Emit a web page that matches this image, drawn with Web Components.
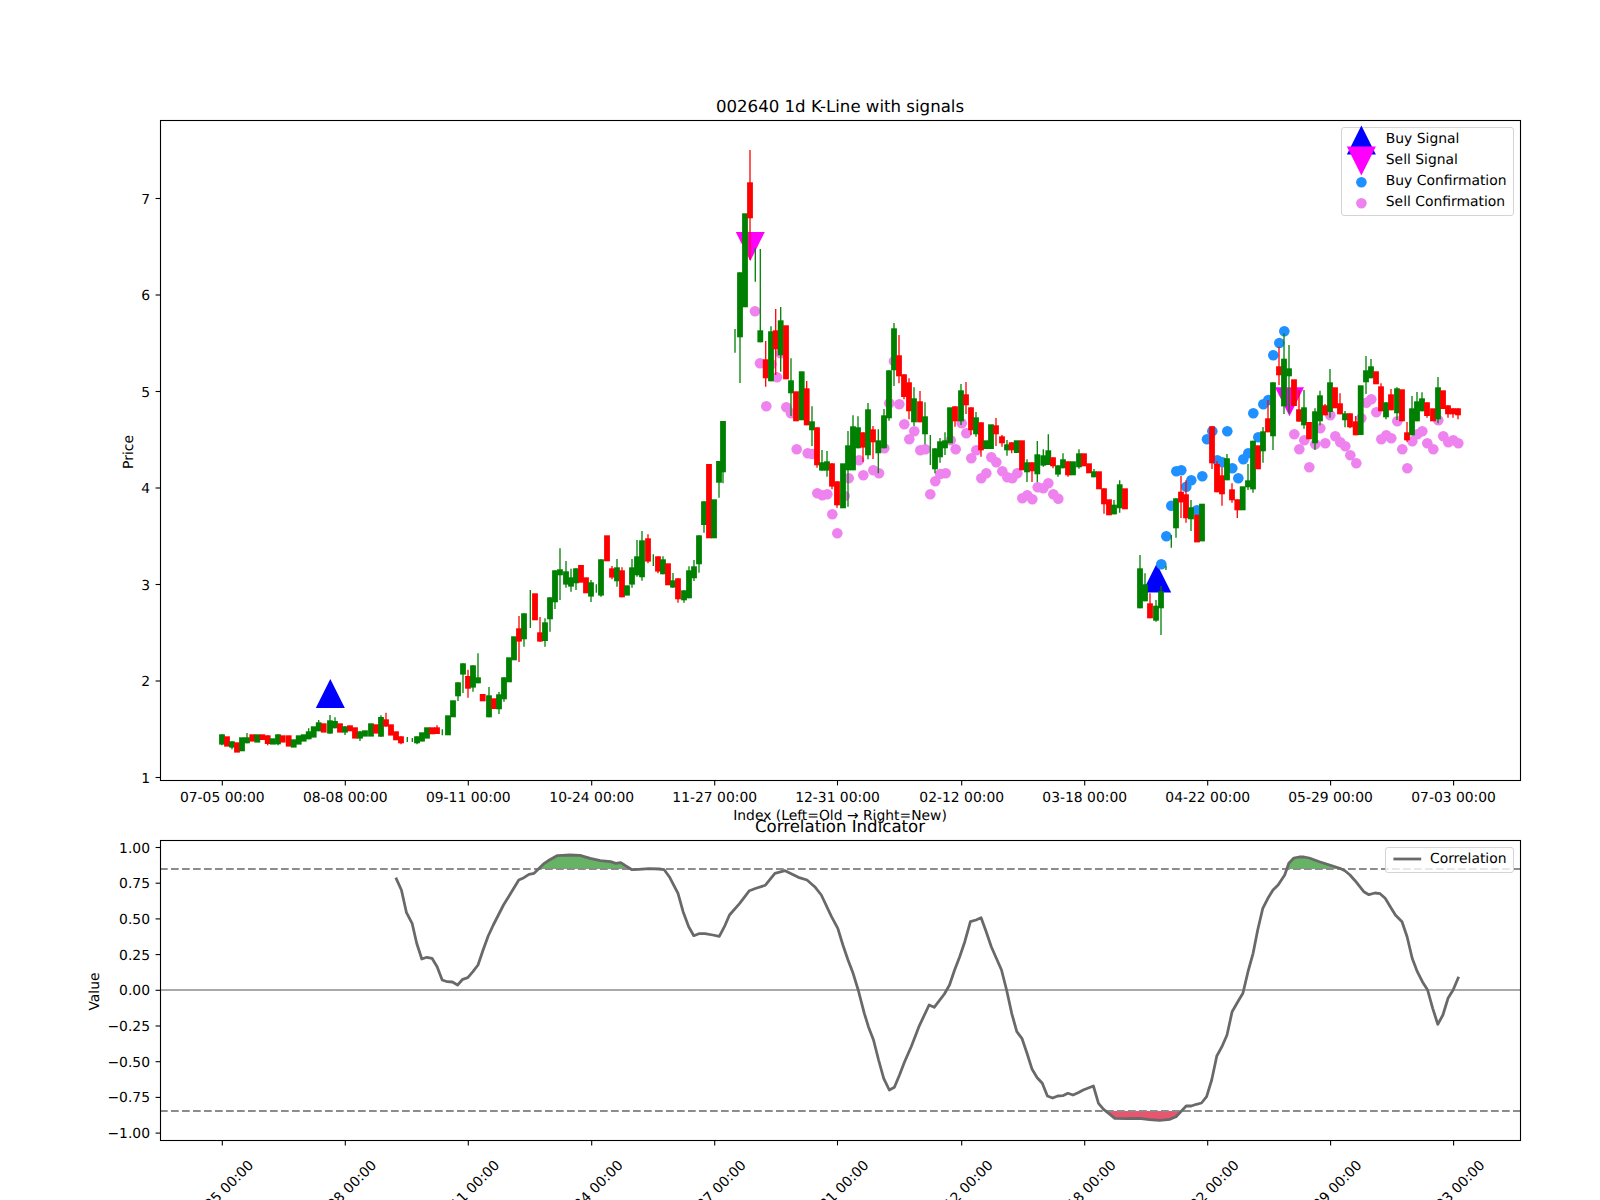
<!DOCTYPE html>
<html>
<head>
<meta charset="utf-8">
<title>002640 1d K-Line with signals</title>
<style>
html, body { margin: 0; padding: 0; background: #fff; overflow: hidden; }
</style>
</head>
<body>
<k-figure>
  <chart-panel title-text="002640 1d K-Line with signals">
    <kline-plot>
      <chart-legend style="top:7.3px">
        <legend-item kind="buy">Buy Signal</legend-item>
        <legend-item kind="sell">Sell Signal</legend-item>
        <legend-item kind="buydot">Buy Confirmation</legend-item>
        <legend-item kind="selldot">Sell Confirmation</legend-item>
      </chart-legend>
    </kline-plot>
  </chart-panel>
  <chart-panel title-text="Correlation Indicator">
    <corr-plot>
      <chart-legend style="top:7.3px">
        <legend-item kind="line">Correlation</legend-item>
      </chart-legend>
    </corr-plot>
  </chart-panel>
</k-figure>

<script>
var GREEN = "#008000";
var RED = "#ff0000";
var BUY_DOT = "#1e90ff";
var SELL_DOT = "#ee82ee";
var LINE = "#696969";
var TICKS = [222.3, 345.3, 468.3, 591.7, 714.7, 837.5, 961.7, 1084.7, 1207.7, 1330.6, 1453.6];
var DATES = ["07-05", "08-08", "09-11", "10-24", "11-27", "12-31", "02-12", "03-18", "04-22", "05-29", "07-03"];

// candles were read off 3x crops, so each block keeps its crop origin
// row: x, colour, body top, body bottom, wick top, wick bottom
var candleBlocks = [
  [200, 660, [
    [66,"g",223,254,223,256],[81,"r",229,260],[96,"g",244,263,244,268],[111,"r",247,278],
    [126,"g",232,274],[141,"g",232,250,219,250],[157,"r",223,245],[172,"g",223,248],
    [187,"r",223,240],[203,"r",226,252,226,256],[218,"g",235,254],[234,"g",223,253,223,256],
    [248,"r",226,248],[266,"r",226,260],[281,"g",238,263],[296,"g",226,254],
    [311,"g",223,245],[326,"g",214,238,205,238],[341,"g",199,233],[356,"g",187,214,180,214],
    [371,"r",190,218],[390,"g",181,221,165,221],[405,"g",183,205,172,205],[420,"r",190,218],
    [435,"g",199,218,199,225],[450,"r",196,214],[465,"r",202,236],[480,"g",214,236,214,243],
    [495,"g",211,230],[513,"g",190,230],[528,"r",193,221],[543,"g",171,230,166,230],
    [558,"r",178,200,158,200],[573,"r",193,227],[588,"r",214,241],[603,"r",229,250,229,253],
    [622,"g",0,0,231,246],[637,"g",0,0,234,246],[651,"g",229,250,229,253],[666,"g",217,245],
    [681,"g",202,236],[696,"r",202,223],[711,"r",202,222,196,222],[727,"g",0,0,208,226],
    [744,"g",166,226],[759,"g",121,172],[774,"g",67,109,67,123],[789,"g",10,44,10,99],
    [804,"r",48,86,29,113],[819,"g",16,83,16,95],[834,"g",52,70,-20,70]
  ]],
  [440, 470, [
    [128,"r",672,694],[147,"g",676,742,651,742],[162,"r",685,717],[177,"g",673,718,666,732],
    [192,"g",622,688,622,695],[207,"g",562,637],[222,"g",499,571],[237,"r",475,515,438,576],
    [252,"g",430,508,430,530],[271,"g",0,0,360,474],[285,"r",370,451],[300,"r",487,515,441,515],
    [315,"g",457,513,445,530],[330,"g",382,448,382,485],[345,"g",301,397,301,417],
    [360,"g",298,316,235,390],[378,"g",304,344,273,353],[393,"g",322,350,296,365],
    [408,"g",295,340,295,360],[423,"r",285,338],[438,"r",322,370],[453,"g",337,380,330,396],
    [469,"g",0,0,343,368],[483,"g",268,377,268,380],[501,"r",196,274],[516,"r",295,323,288,328],
    [531,"g",292,334,267,350],[546,"r",301,382,292,382],[561,"g",346,377],[576,"g",292,344,267,353],
    [591,"g",259,316,210,320],[606,"g",211,322,183,332],[624,"r",205,275,193,280],
    [640,"g",0,0,253,288],[654,"r",259,305,259,310],[669,"g",268,313,259,313],[684,"r",280,346],
    [699,"g",331,353,309,353],[714,"r",325,388,325,398],[732,"g",361,391,361,398],
    [747,"g",301,385,289,385],[762,"g",289,325,270,333],[777,"g",196,283,196,308],
    [792,"g",94,165,94,188],[807,"r",-18,205],[822,"g",88,205],[837,"g",-27,38,-27,83],
    [849,"g",-147,7,-147,40]
  ]],
  [700, 130, [
    [105,"g",0,0,597,668],[120,"g",427,622,427,759],[135,"g",250,532],[150,"r",157,265,60,390],
    [166,"g",0,0,355,455],[181,"g",601,637,357,637]
  ]],
  [740, 300, [
    [77,"r",178,235,123,260],[93,"g",94,244,79,244],[107,"r",91,148,27,225],[122,"g",61,166,21,215],
    [138,"r",76,238],[153,"g",241,280,175,348],[168,"r",274,364],[185,"g",214,361],
    [200,"r",265,376,243,376],[216,"g",364,391,319,438],[231,"r",382,496,382,503],
    [246,"g",487,512,450,512],[261,"g",484,512,453,530],[276,"r",490,560,490,568],
    [291,"r",544,616,544,623],[309,"g",490,625],[324,"g",436,511,393,620],[339,"g",379,511,346,511],
    [354,"g",382,445,349,445],[369,"r",397,443,397,486],[384,"g",328,466,309,478],
    [399,"r",388,427,378,477],[415,"g",421,460,388,520],[432,"g",346,445,327,445],
    [447,"g",211,355,211,362],[462,"g",85,211,69,258],[477,"r",166,229,105,250],
    [492,"r",223,291,223,298],[507,"r",247,334,235,358],[522,"g",295,367,262,378],
    [540,"r",304,367,273,367],[555,"g",349,403,307,433],[571,"g",0,0,405,495],
    [585,"g",445,508,445,520],[600,"g",424,472,414,488],[615,"g",421,445,397,465],
    [630,"g",322,430],[645,"r",319,364,319,380],[663,"g",271,364,252,375],[678,"r",283,316,246,342],
    [693,"r",322,391,322,405],[708,"g",352,403,336,410],[723,"r",367,451,367,470],
    [738,"g",421,447],[753,"g",373,447],[768,"r",376,403,354,438],[786,"r",409,430,405,440],
    [801,"g",433,451,420,467],[815,"r",427,451,427,460],[830,"g",421,459],[846,"r",421,511],
    [861,"g",487,517,478,546],[876,"r",487,514,487,546],[892,"g",463,523,423,547]
  ]],
  [1040, 300, [
    [10,"g",466,497,448,500],[25,"g",451,495,403,495],[39,"r",472,499,472,505],[54,"g",496,524,496,530],
    [69,"g",478,505,460,505],[84,"r",484,526,484,530],[99,"g",484,526],[117,"g",460,502,448,506],
    [132,"r",460,499],[147,"r",490,520],[162,"g",514,532,507,532],[177,"r",514,568],
    [192,"r",565,613,565,641],[207,"r",598,646],[222,"g",614,643,600,643],[239,"g",553,625,541,638],
    [255,"r",565,628],
    [300,"g",805,925,765,925],[315,"g",853,904,820,904],[330,"r",910,955,880,955],
    [348,"g",917,962,900,965],[363,"g",874,925,858,1005],[378,"g",0,0,797,810],[394,"g",0,0,705,743],
    [408,"g",595,685,595,713],[423,"r",575,607,528,654],[438,"r",583,655,541,668],
    [453,"g",622,658,600,693],[471,"r",644,727],[486,"g",611,724],[516,"r",379,490,379,507],
    [531,"r",492,577,484,577],[546,"r",526,583,502,617],[561,"g",475,541,462,541],
    [576,"r",568,601,550,608],[592,"r",598,631,598,654],[608,"g",559,631],[624,"g",541,562,492,570],
    [639,"g",422,568,422,578],[654,"r",436,508],[669,"g",394,454,381,488],[684,"r",355,397,300,397],
    [699,"g",247,409,247,450],[717,"r",199,226,140,255],[732,"g",176,319,100,342],[747,"g",205,229,135,340]
  ]],
  [1240, 320, [
    [162,"r",178,258],[177,"r",268,305,210,305],[192,"g",262,316,210,326],[207,"r",306,358],
    [225,"g",274,370,265,390],[240,"g",226,304,212,316],[255,"r",256,286,252,286],
    [270,"g",187,276,147,293],[285,"r",202,265],[300,"r",250,283,220,283],[315,"g",280,301,273,322],
    [330,"r",280,322,280,325],[347,"r",304,346,288,346],[362,"g",196,345],[378,"g",151,187,108,222],
    [393,"g",139,175,117,175],[408,"r",154,193],[423,"r",199,274,190,274],[438,"g",247,292,247,298],
    [453,"r",223,271,207,271],[471,"g",205,280,202,300],[486,"r",208,304],[501,"r",337,361,306,365],
    [516,"g",265,346,228,346],[531,"g",244,304,216,304],[546,"g",235,274,217,274],
    [561,"r",247,288,247,293],[579,"r",265,304],[594,"g",202,298,171,310],[609,"r",211,267],
    [624,"r",256,283,256,293],[639,"r",265,283,265,293],[654,"r",265,286,265,298]
  ]]
];

var sellDotBlocks = [
  [740, 300, [
    [45,34],[60,190],[94,193],[111,232],[79,319],[122,160],[139,322],[153,340],[170,448],[203,460],
    [217,462],[232,580],[247,586],[262,583],[277,643],[292,700],[314,588],[326,535],[357,481],[370,526],
    [400,511],[417,520],[433,445],[448,310],[462,184],[478,313],[493,373],[508,418],[523,394],[541,451],
    [556,448],[571,583],[586,544],[601,522],[617,520],[632,421],[647,448],[665,370],[679,400],[694,475],
    [709,451],[724,535],[739,520],[754,472],[769,487],[787,514],[802,532],[817,535],[832,520],[847,595],
    [862,586],[877,598],[893,562]
  ]],
  [1040, 300, [[10,565],[25,550],[40,583],[55,596]]],
  [1240, 320, [
    [163,343],[178,388],[193,361],[208,442],[226,373],[241,325],[256,370],[271,286],[286,349],[301,367],
    [316,379],[331,406],[349,430],[364,295],[379,248],[394,238],[409,277],[424,358],[439,346],[454,355],
    [472,304],[487,388],[502,445],[517,364],[532,343],[547,334],[562,370],[580,388],[595,301],[610,349],
    [625,367],[640,361],[655,370]
  ]]
];

var buyDotBlocks = [
  [1040, 300, [
    [364,793],[379,709],[394,617],[409,514],[424,511],[439,560],[454,541],[471,631],[487,529],[501,418],
    [517,394],[532,481],[547,487],[562,394],[577,505],[595,535],[610,478],[625,460],[640,340],[655,412],
    [670,313],[685,300],[700,166],[718,129],[733,94]
  ]]
];

// correlation crops were 1.96x wide and 3x tall
var corrLeft = [
  [619,143],[630,180],[640,248],[651,280],[660,340],[670,387],[680,382],[690,385],[700,410],[710,450],
  [720,455],[730,456],[740,465],[750,448],[760,443],[770,425],[780,405],[790,360],[800,318],[810,285],
  [820,255],[830,225],[840,200],[860,150],[870,143],[880,133],[890,130],[900,115],[910,100],[920,90],
  [935,77],[945,76],[960,75],[980,76],[1000,85],[1020,92],[1040,95],[1050,100],[1060,98],[1070,108],
  [1082,119],[1095,118],[1115,116],[1135,117],[1145,119],[1155,140],[1172,190],[1182,245],[1193,290],
  [1203,317],[1213,311],[1225,311],[1240,315],[1253,319],[1263,290],[1273,255],[1293,220],[1312,182],
  [1325,175],[1343,166],[1362,130],[1382,122],[1395,132],[1408,142],[1425,150],[1440,170],[1453,195],
  [1473,260]
];
var corrRight = [
  [74,295],[84,345],[94,390],[104,430],[114,480],[126,550],[134,590],[144,630],[154,690],[164,745],
  [175,780],[185,772],[195,735],[205,695],[218,650],[233,590],[253,525],[263,532],[273,512],[283,492],
  [293,465],[303,420],[313,380],[323,335],[334,275],[345,270],[355,263],[365,305],[375,350],[395,420],
  [405,480],[415,550],[425,605],[435,625],[445,670],[455,718],[465,743],[475,760],[485,798],[495,804],
  [505,798],[515,797],[525,790],[535,795],[545,788],[555,780],[575,768],[585,820],[595,838],[605,850],
  [617,865],[640,866],[665,865],[685,869],[705,871],[725,868],[737,860],[757,828],[767,828],[777,823],
  [787,819],[797,800],[807,750],[817,678],[827,650],[837,615],[847,545],[858,515],[868,490],[878,425],
  [888,370],[897,300],[907,235],[917,205],[927,180],[937,165],[950,135],[958,100],[968,84],[978,81],
  [988,81],[998,84],[1018,95],[1038,105],[1058,115],[1068,122],[1078,135],[1088,152],[1105,185],
  [1115,194],[1127,189],[1137,191],[1147,205],[1157,230],[1167,255],[1180,275],[1190,320],[1200,385],
  [1210,425],[1220,455],[1230,480],[1240,535],[1250,583],[1260,555],[1270,505],[1280,480],[1291,440]
];

var triangle = function(cx, top, up, color) {
  var s = 14.5, h = 29;
  var pts = up
    ? [cx, top, cx + s, top + h, cx - s, top + h]
    : [cx - s, top, cx + s, top, cx, top + h];
  return `<polygon points="${pts.join(" ")}" fill="${color}"/>`;
};

var dots = function(blocks, color) {
  return blocks.map(function([ox, oy, rows]) {
    return rows.map(([x, y]) =>
      `<circle cx="${(ox + x / 3).toFixed(1)}" cy="${(oy + y / 3).toFixed(1)}" r="5.3" fill="${color}"/>`
    ).join("");
  }).join("");
};

var candles = function() {
  return candleBlocks.map(function([ox, oy, rows]) {
    return rows.map(function([x, c, top, bot, wt, wb]) {
      var color = c == "g" ? GREEN : RED;
      var px = ox + x / 3;
      var out = "";
      if (wt !== undefined) {
        out += `<line x1="${px.toFixed(1)}" x2="${px.toFixed(1)}" y1="${(oy + wt / 3).toFixed(1)}" y2="${(oy + wb / 3).toFixed(1)}" stroke="${color}" stroke-width="1.3"/>`;
      }
      if (bot > top) {
        out += `<rect x="${(px - 2.9).toFixed(1)}" y="${(oy + top / 3).toFixed(1)}" width="5.8" height="${((bot - top) / 3).toFixed(1)}" fill="${color}"/>`;
      }
      return out;
    }).join("");
  }).join("");
};

// common spines and tick marks; y rows are [position, label]
var frame = function(x0, y0, w, h, yTicks) {
  var out = `<rect x="${x0 + 0.5}" y="${y0 + 0.5}" width="${w}" height="${h}" fill="none" stroke="#000" stroke-width="1.1"/>`;
  var y1 = y0 + h + 0.5;
  TICKS.forEach(t => {
    out += `<line x1="${t}" x2="${t}" y1="${y1}" y2="${y1 + 4.9}" stroke="#000" stroke-width="1.1"/>`;
  });
  yTicks.forEach(([y, label]) => {
    out += `<line x1="${x0 + 0.5}" x2="${x0 - 4.4}" y1="${y}" y2="${y}" stroke="#000" stroke-width="1.1"/>`;
    out += `<text x="${x0 - 10}" y="${y + 5}" text-anchor="end">${label}</text>`;
  });
  return out;
};

var plotStyle = `
<style>
:host {
  display: block;
  position: relative;
  width: 1360px;
  margin-left: 160px;
}
svg {
  display: block;
  overflow: visible;
}
text {
  font: 13.89px "DejaVu Sans", sans-serif;
  text-rendering: geometricPrecision;
  fill: #000;
}
</style>`;

class KFigure extends HTMLElement {
  constructor() {
    super();
    var root = this.attachShadow({ mode: "open" });
    root.innerHTML = `
<style>
:host {
  display: flex;
  flex-direction: column;
  gap: 34px;
  width: 1600px;
  height: 1200px;
  box-sizing: border-box;
  padding-top: 94px;
  overflow: hidden;
  background: #fff;
  color: #000;
  font: 13.89px "DejaVu Sans", sans-serif;
  text-rendering: geometricPrecision;
}
</style>
<slot></slot>`;
  }
}

class ChartPanel extends HTMLElement {
  constructor() {
    super();
    var root = this.attachShadow({ mode: "open" });
    root.innerHTML = `
<style>
:host {
  display: block;
}
.title {
  margin-left: 160px;
  width: 1360px;
  height: 26px;
  line-height: 26px;
  font-size: 16.6px;
  text-align: center;
  white-space: nowrap;
}
</style>
<div class="title"></div>
<slot></slot>`;
    root.querySelector(".title").textContent = this.getAttribute("title-text");
  }
}

class KlinePlot extends HTMLElement {
  constructor() {
    super();
    var root = this.attachShadow({ mode: "open" });
    var yTicks = [1, 2, 3, 4, 5, 6, 7].map(v => [777.5 - (v - 1) * 96.5, v]);
    var labels = TICKS.map((t, i) =>
      `<text x="${t}" y="801.7" text-anchor="middle">${DATES[i]} 00:00</text>`
    ).join("");
    root.innerHTML = `${plotStyle}
<svg width="1360" height="660" viewBox="160 120 1360 660">
  ${triangle(330.3, 679, true, "#0000ff")}
  ${triangle(1156.7, 563.5, true, "#0000ff")}
  ${triangle(750.3, 232, false, "#ff00ff")}
  ${triangle(1289.5, 387.3, false, "#ff00ff")}
  ${dots(buyDotBlocks, BUY_DOT)}
  ${dots(sellDotBlocks, SELL_DOT)}
  ${candles()}
  ${frame(160, 120, 1360, 660, yTicks)}
  ${labels}
  <text x="840" y="819.5" text-anchor="middle">Index (Left=Old → Right=New)</text>
  <text transform="translate(133 452) rotate(-90)" text-anchor="middle">Price</text>
</svg>
<slot></slot>`;
  }
}

class CorrPlot extends HTMLElement {
  constructor() {
    super();
    var root = this.attachShadow({ mode: "open" });
    var line = corrLeft.map(([x, y]) => [80 + x / 1.96, 830 + y / 3])
      .concat(corrRight.map(([x, y]) => [800 + x / 1.96, 830 + y / 3]));
    var path = line.map(p => p[0].toFixed(1) + "," + p[1].toFixed(1)).join(" ");

    var yTicks = [1, 0.75, 0.5, 0.25, 0, -0.25, -0.5, -0.75, -1].map(v =>
      [990.3 - v * 142.8, v.toFixed(2).replace("-", "\u2212")]
    );
    var labels = TICKS.map((t, i) =>
      `<text transform="translate(${t + 2} 1196) rotate(-45)" text-anchor="middle">${DATES[i]} 00:00</text>`
    ).join("");

    root.innerHTML = `${plotStyle}
<svg width="1360" height="300" viewBox="160 840 1360 300">
  ${this.band(line, 869, -1, "#66b366")}
  ${this.band(line, 1111, 1, "#e8556f")}
  <line x1="160" x2="1520" y1="990" y2="990" stroke="#a9a9a9" stroke-width="2"/>
  <line x1="160" x2="1520" y1="869" y2="869" stroke="#8c8c8c" stroke-width="2" stroke-dasharray="7.7 3.3"/>
  <line x1="160" x2="1520" y1="1111" y2="1111" stroke="#8c8c8c" stroke-width="2" stroke-dasharray="7.7 3.3"/>
  <polyline points="${path}" fill="none" stroke="${LINE}" stroke-width="2.78" stroke-linejoin="round"/>
  ${frame(160, 840, 1360, 300, yTicks)}
  ${labels}
  <text transform="translate(98.5 991.5) rotate(-90)" text-anchor="middle">Value</text>
</svg>
<slot></slot>`;
  }

  // fill between the line and a threshold wherever the line passes it
  band(line, level, sign, color) {
    var out = "", run = [];
    var close = function() {
      if (run.length > 2) {
        out += `<polygon points="${run.map(p => p.join(",")).join(" ")}" fill="${color}"/>`;
      }
      run = [];
    };
    line.forEach(function(p, i) {
      var past = (p[1] - level) * sign > 0;
      var prev = line[i - 1];
      if (prev && past != (prev[1] - level) * sign > 0) {
        var k = (level - prev[1]) / (p[1] - prev[1]);
        var cross = [prev[0] + (p[0] - prev[0]) * k, level];
        run.push(cross);
        if (!past) close();
      }
      if (past) run.push(p);
    });
    close();
    return out;
  }
}

class ChartLegend extends HTMLElement {
  constructor() {
    super();
    var root = this.attachShadow({ mode: "open" });
    root.innerHTML = `
<style>
:host {
  display: flex;
  flex-direction: column;
  position: absolute;
  right: 6px;
  box-sizing: border-box;
  padding-bottom: 2.4px;
  background: rgba(255, 255, 255, 0.8);
  border: 1px solid #d4d4d4;
  border-radius: 3px;
}
</style>
<slot></slot>`;
  }
}

class LegendItem extends HTMLElement {
  constructor() {
    super();
    var root = this.attachShadow({ mode: "open" });
    var kind = this.getAttribute("kind");
    var marks = {
      buy: triangle(13.4, -2.5, true, "#0000ff"),
      sell: triangle(13.4, -2.5, false, "#ff00ff"),
      buydot: `<circle cx="13.4" cy="12.3" r="5.3" fill="${BUY_DOT}"/>`,
      selldot: `<circle cx="13.4" cy="12.3" r="5.3" fill="${SELL_DOT}"/>`,
      line: `<line x1="1.4" x2="29.2" y1="11" y2="11" stroke="${LINE}" stroke-width="2.78"/>`
    };
    root.innerHTML = `
<style>
:host {
  display: flex;
  align-items: center;
  gap: 10.4px;
  height: 21px;
  padding: 0 6.5px 0 5.5px;
  line-height: 21px;
  white-space: nowrap;
}
svg {
  display: block;
  flex: none;
  overflow: visible;
}
span {
  margin-top: 2px;
}
</style>
<svg width="27.8" height="21">${marks[kind]}</svg>
<span><slot></slot></span>`;
  }
}

customElements.define("k-figure", KFigure);
customElements.define("chart-panel", ChartPanel);
customElements.define("kline-plot", KlinePlot);
customElements.define("corr-plot", CorrPlot);
customElements.define("chart-legend", ChartLegend);
customElements.define("legend-item", LegendItem);
</script>
</body>
</html>
